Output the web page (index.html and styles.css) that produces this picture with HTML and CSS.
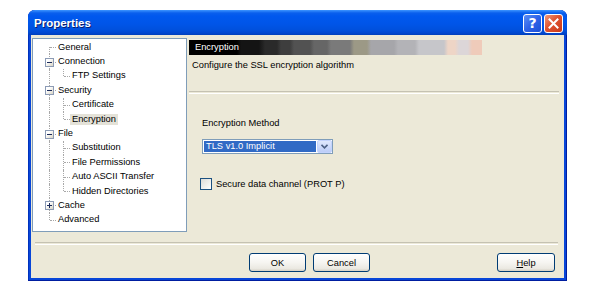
FILE: index.html
```html
<!DOCTYPE html>
<html>
<head>
<meta charset="utf-8">
<link rel="stylesheet" href="styles.css">
</head>
<body>
<div class="window">
  <div class="titlebar">
    <span class="title">Properties</span>
    <div class="caption-btns">
      <span class="cbtn cbtn-help">?</span>
      <span class="cbtn cbtn-close"><svg width="11" height="11" viewBox="0 0 11 11"><path d="M1.5 1.5 L9.5 9.5 M9.5 1.5 L1.5 9.5" stroke="#fff" stroke-width="2" stroke-linecap="square"/></svg></span>
    </div>
  </div>
  <div class="client">
    <div class="main">
      <div class="tree">
        <div class="row"><span class="c first"></span><span class="label">General</span></div>
        <div class="row"><span class="c tee"><span class="exp minus"></span></span><span class="label">Connection</span></div>
        <div class="row"><span class="c pipe"></span><span class="c ell"></span><span class="label">FTP Settings</span></div>
        <div class="row"><span class="c tee"><span class="exp minus"></span></span><span class="label">Security</span></div>
        <div class="row"><span class="c pipe"></span><span class="c tee"></span><span class="label">Certificate</span></div>
        <div class="row"><span class="c pipe"></span><span class="c ell"></span><span class="label selected">Encryption</span></div>
        <div class="row"><span class="c tee"><span class="exp minus"></span></span><span class="label">File</span></div>
        <div class="row"><span class="c pipe"></span><span class="c tee"></span><span class="label">Substitution</span></div>
        <div class="row"><span class="c pipe"></span><span class="c tee"></span><span class="label">File Permissions</span></div>
        <div class="row"><span class="c pipe"></span><span class="c tee"></span><span class="label">Auto ASCII Transfer</span></div>
        <div class="row"><span class="c pipe"></span><span class="c ell"></span><span class="label">Hidden Directories</span></div>
        <div class="row"><span class="c tee"><span class="exp plus"></span></span><span class="label">Cache</span></div>
        <div class="row"><span class="c ell"></span><span class="label">Advanced</span></div>
      </div>
      <div class="page">
        <div class="page-head">Encryption</div>
        <div class="page-desc">Configure the SSL encryption algorithm</div>
        <div class="sep page-sep"></div>
        <div class="page-body">
          <div class="field-label">Encryption Method</div>
          <div class="combo">
            <span class="combo-value">TLS v1.0 Implicit</span>
            <span class="combo-btn"><svg width="7" height="5" viewBox="0 0 7 5"><path d="M0.5 0.8 L3.5 3.8 L6.5 0.8" fill="none" stroke="#4d6185" stroke-width="1.6"/></svg></span>
          </div>
          <div class="check"><span class="box"></span><span>Secure data channel (PROT P)</span></div>
        </div>
      </div>
    </div>
    <div class="sep bottom-sep"></div>
    <div class="buttons">
      <span class="btn">OK</span>
      <span class="btn">Cancel</span>
      <span class="spacer"></span>
      <span class="btn"><u>H</u>elp</span>
    </div>
  </div>
</div>
</body>
</html>
```
FILE: styles.css
```css
html, body { margin: 0; padding: 0; background: #fff; }
body {
  font-family: "Liberation Sans", Arial, sans-serif;
  font-size: 9.3px;
  color: #000;
}
.window {
  margin: 10px 0 0 28px;
  width: 539px;
  height: 271px;
  box-sizing: border-box;
  background: #0846d8;
  border-radius: 7px 7px 0 0;
  display: flex;
  flex-direction: column;
  padding: 0 3px 3px 3px;
  box-shadow: inset 0 -1px 0 #001ea0, inset 1px 0 0 #0031bd, inset -1px 0 0 #001ea0;
}
.titlebar {
  height: 25px;
  flex: none;
  margin: 0 -3px;
  padding: 0 4px 0 6px;
  border-radius: 7px 7px 0 0;
  background: linear-gradient(to bottom, #3d95ff 0, #0a5fed 3px, #0058ee 6px, #0055e8 14px, #0050dc 20px, #0047d0 23px, #003fba 25px);
  display: flex;
  align-items: center;
}
.title {
  color: #fff;
  font-weight: bold;
  font-size: 11.5px;
  text-shadow: 1px 1px 0 #0a1e6e;
  flex: 1;
  padding-top: 1px;
}
.caption-btns { display: flex; gap: 2px; padding-top: 1px; }
.cbtn {
  width: 19px;
  height: 19px;
  box-sizing: border-box;
  border: 1px solid #fff;
  border-radius: 3px;
  display: flex;
  align-items: center;
  justify-content: center;
}
.cbtn-help {
  background: linear-gradient(135deg, #5b8ff5 0%, #2f63e8 50%, #1c4fd6 100%);
  color: #fff;
  font-weight: bold;
  font-size: 14px;
  font-family: "DejaVu Sans", sans-serif;
}
.cbtn-close {
  background: linear-gradient(135deg, #f09a7a 0%, #e0532f 45%, #c8381a 100%);
}
.client {
  flex: 1;
  background: #ece9d8;
  display: flex;
  flex-direction: column;
  padding: 3px 0 0 1px;
}
.main { display: flex; height: 194px; flex: none; }
.tree {
  width: 155px;
  box-sizing: border-box;
  background: #fff;
  border: 1px solid #7f9db9;
  padding: 1px 0 0 9px;
}
.row { height: 14.4px; display: flex; align-items: center; }
.c { width: 14px; height: 100%; position: relative; flex: none; }
.c::before {
  content: "";
  position: absolute;
  left: 7px; top: 0; bottom: 0;
  border-left: 1px dotted #a8a8a8;
}
.c.first::before { top: 50%; }
.c.ell::before { bottom: 50%; }
.c.tee::after, .c.ell::after, .c.first::after {
  content: "";
  position: absolute;
  left: 8px; right: 0; top: 50%;
  border-top: 1px dotted #a8a8a8;
}
.exp {
  position: absolute;
  left: 3px; top: 50%;
  margin-top: -4px;
  width: 9px; height: 9px;
  box-sizing: border-box;
  border: 1px solid #8c9bb5;
  background: linear-gradient(135deg, #fff 30%, #d8d4c4 100%);
  z-index: 1;
}
.exp::before {
  content: "";
  position: absolute;
  left: 1px; top: 3px;
  width: 5px; height: 1px;
  background: #1a2a5a;
}
.exp.plus::after {
  content: "";
  position: absolute;
  left: 3px; top: 1px;
  width: 1px; height: 5px;
  background: #1a2a5a;
}
.label { padding: 1px 2px; line-height: 9px; white-space: nowrap; }
.label.selected { background: #e4e2d8; }
.page {
  flex: 1;
  display: flex;
  flex-direction: column;
  padding: 2px 5px 0 2px;
}
.page-head {
  width: 293px;
  height: 15px;
  box-sizing: border-box;
  padding: 0 0 0 6px;
  color: #fff;
  line-height: 15px;
  background: linear-gradient(to right,
    #000 0 48px, #141414 52px 70px, #2a2a2a 76px 88px, #3e3e3e 92px 101px,
    #525252 105px 121px, #666 125px 138px, #7a7a7a 142px 161px,
    #9c9986 165px 178px, #a6a6aa 182px 205px, #b3b3b7 209px 226px,
    #c6c6ca 230px 255px, #eed5c6 259px 266px, #dcd6d8 270px 279px, #efcbba 283px 293px);
}
.page-desc { padding: 5px 0 0 3px; line-height: 11px; }
.sep {
  height: 1px;
  border-top: 1px solid #c5c2b2;
  border-bottom: 1px solid #fff;
  flex: none;
}
.page-sep { margin-top: 20px; }
.page-body { padding: 24px 0 0 13px; }
.field-label { line-height: 11px; }
.combo {
  margin-top: 10px;
  width: 131px;
  height: 15px;
  box-sizing: border-box;
  border: 1px solid #7f9db9;
  background: #fff;
  display: flex;
  padding: 1px;
}
.combo-value {
  flex: 1;
  background: #316ac5;
  color: #fff;
  line-height: 11px;
  padding-left: 2px;
}
.combo-btn {
  width: 13px;
  margin: -1px -1px -1px 1px;
  background: linear-gradient(to bottom, #dfe8fd, #bccdf8);
  border: 1px solid #c3d3fd;
  border-radius: 2px;
  display: flex;
  align-items: center;
  justify-content: center;
}
.check {
  margin-top: 24px;
  display: flex;
  align-items: center;
  gap: 4px;
  margin-left: -2px;
}
.box {
  width: 12px; height: 12px;
  box-sizing: border-box;
  border: 1px solid #1c5180;
  background: linear-gradient(135deg, #dcdcd7 0%, #f5f5f2 70%, #fff 100%);
}
.bottom-sep { margin: 10px 6px 0 3px; }
.buttons {
  display: flex;
  gap: 7px;
  padding: 8px 9px 0 217px;
}
.spacer { flex: 1; }
.btn {
  width: 57px;
  height: 19px;
  box-sizing: border-box;
  border: 1px solid #003c74;
  border-radius: 3px;
  background: linear-gradient(to bottom, #fff 0%, #f6f5f1 50%, #ebe9e2 85%, #d6d0c5 100%);
  display: flex;
  align-items: center;
  justify-content: center;
}
.btn:last-child { width: 58px; }
```
